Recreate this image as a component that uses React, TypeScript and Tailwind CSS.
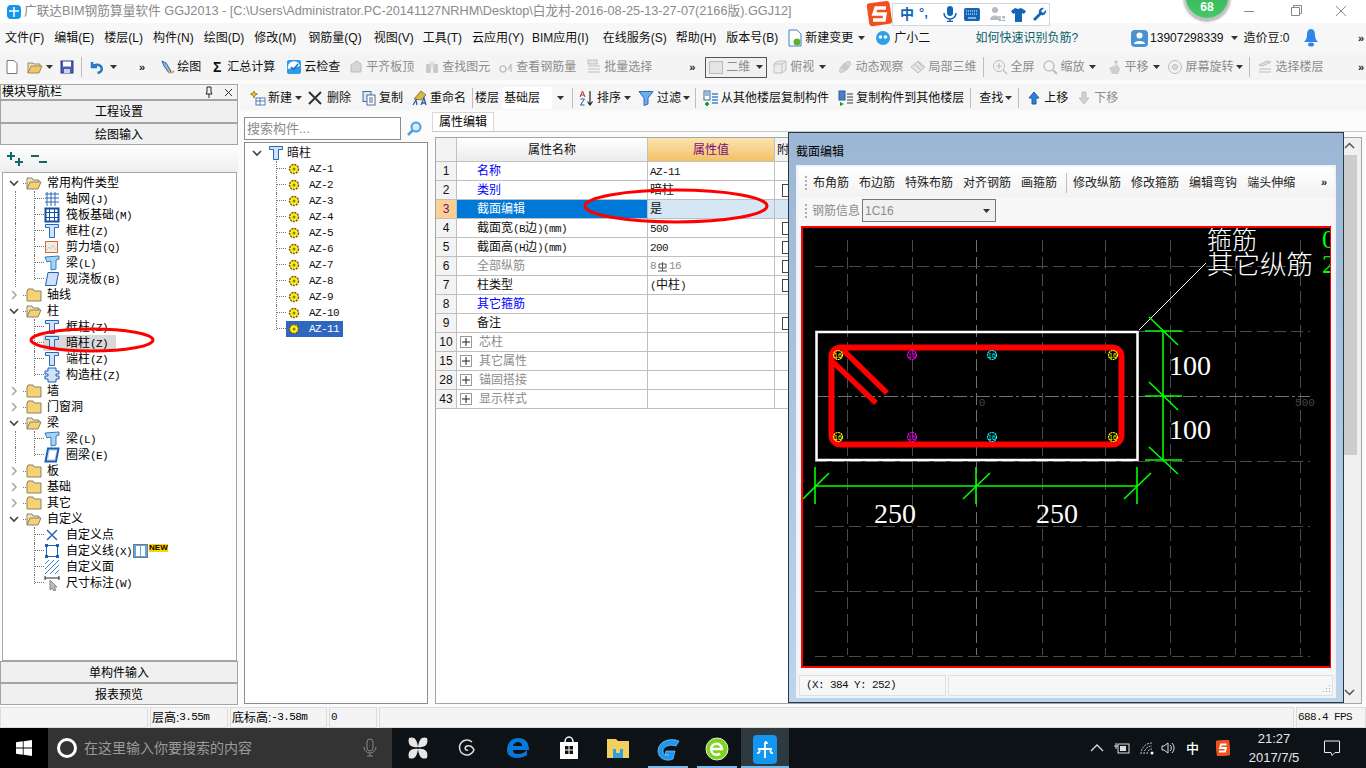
import React from "react";
import clsx from "clsx";

type Ico = React.FC<{ className?: string }>;
const svg = (children: React.ReactNode, w = 16, h = 16): Ico => ({ className }) => (
  <svg width={w} height={h} viewBox={`0 0 ${w} ${h}`} className={clsx("shrink-0", className)}>{children}</svg>
);

// --- tree icons
const FolderClosed = svg(<path d="M1 4l1-2h5l1 2h7v10H1z" fill="#f6d272" stroke="#8f8266" />);
const FolderOpen = svg(<><path d="M1 14V3h5l1 2h6v2" fill="#efe3c0" stroke="#8f8266" /><path d="M1 14l3-7h11l-3 7z" fill="#f6d272" stroke="#8f8266" /></>);
const Column = svg(<path d="M1.500 1.500h13v3h-4v10h-5v-10h-4z" fill="#cfe2f8" stroke="#2a66b8" />);
const GridIco = svg(<path d="M1 3h14M1 7h14M1 11h14M3 1v14M7 1v14M11 1v14" stroke="#2a66b8" fill="none" />);
const RaftIco = svg(<><rect x="1.500" y="1.500" width="13" height="13" fill="#fff" stroke="#164f9c" strokeWidth="2" /><path d="M1 5.500h14M1 10.500h14M5.500 1v14M10.500 1v14" stroke="#164f9c" /></>);
const WallIco = svg(<><rect x="1.500" y="2.500" width="12" height="11" fill="#f4ece0" stroke="#d2693a" /><path d="M3 11l2-3 2 2 2-4 3 5" stroke="#aaa" fill="none" strokeDasharray="1 1" /></>);
const BeamIco = svg(<path d="M1 2l14-1v3l-3 1v9l-5 1V6L3 7z" fill="#a9d2f2" stroke="#2a7fc8" />);
const SlabIco = svg(<path d="M4 1.500h10.500l-2.500 13H1.500z" fill="#cfe2f8" stroke="#1f5fb4" />);
const RingIco = svg(<><path d="M4 1.500h10.500l-2.500 13H1.500z" fill="#cfe2f8" stroke="#1f5fb4" strokeWidth="2" /><path d="M6 4h6l-1.500 8H4.500z" fill="#fff" /></>);
const GzzIco = svg(<path d="M4 1h8v3h3v3h-3v2h3v3h-3v3H4v-3H1V9h3V7H1V4h3z" fill="#cfe2f8" stroke="#1f5fb4" />);
const PointIco = svg(<path d="M3 3l10 10M13 3L3 13" stroke="#2a66b8" strokeWidth="1.500" />);
const LineIco = svg(<><rect x="2.500" y="2.500" width="11" height="11" fill="none" stroke="#1f5fb4" /><path d="M1 1h3v3H1zM12 1h3v3h-3zM1 12h3v3H1zM12 12h3v3h-3z" fill="#1f5fb4" /></>);
const HatchIco = svg(<path d="M1 5l4-4M1 10l9-9M1 15L15 1M6 15l9-9M11 15l4-4" stroke="#3f7fd0" />);
const DimIco = svg(<><path d="M1 1v4M1 3h14M15 1v4" stroke="#222" /><path d="M6 5v10l2-2 2 3 2-1-2-3h3z" fill="#bbb" stroke="#888" /></>);
const Rebar = svg(<><circle cx="8" cy="8" r="4.500" fill="#ffef1a" stroke="#6b5a10" strokeWidth="1.500" strokeDasharray="2 1" /><circle cx="8" cy="8" r="1.500" fill="#8a7a10" /></>);

// --- toolbar icons
const DocIco = svg(<path d="M3 1.500h7l3 3v10H3z" fill="#fff" stroke="#777" />);
const OpenIco = svg(<><path d="M1 14V4h5l1 1h6v2" fill="#efe3c0" stroke="#9a8a5a" /><path d="M1 14l3-7h11l-3 7z" fill="#f3c568" stroke="#9a8a5a" /></>);
const SaveIco = svg(<><rect x="2" y="2" width="12" height="12" fill="#4a5bb0" stroke="#2c3a85" /><rect x="4" y="2.500" width="8" height="5" fill="#fff" /><rect x="5" y="10" width="6" height="4" fill="#cdd3ee" /></>);
const UndoIco = svg(<path d="M3 3v5h5M3.500 7.500c3-3 8-2 9 1s-1 5-4 5.500" fill="none" stroke="#2a78c8" strokeWidth="2.500" />);
const PencilIco = svg(<><path d="M3 2l4 2 5 8-2 2-5-7z" fill="#8fb6e0" stroke="#3a5f98" /><path d="M9 13a4 3 0 006-1" fill="none" stroke="#c9a04a" strokeWidth="1.500" /></>);
const CheckIco = svg(<><rect x="1" y="1" width="14" height="14" rx="2" fill="#2f9be8" /><path d="M2 10a6 6 0 0112-3" fill="#fff" /><path d="M5 8l2.500 2.500L12 5" fill="none" stroke="#1c72c0" strokeWidth="1.500" /></>);
const GrayBlock = svg(<path d="M3 13V6l6-4 4 3v8z" fill="#d6d6d6" stroke="#bbb" />);
const GrayBino = svg(<><rect x="2" y="5" width="5" height="9" rx="1.500" fill="#c9c9c9" /><rect x="9" y="5" width="5" height="9" rx="1.500" fill="#c9c9c9" /><rect x="6" y="3" width="4" height="5" fill="#dcdcdc" /></>);
const GrayLink = svg(<path d="M2 10a3 3 0 016 0 3 3 0 01-6 0zM10 11l3-6v8" fill="none" stroke="#c4c4c4" strokeWidth="1.500" />);
const GrayList = svg(<><rect x="2" y="1" width="9" height="4" fill="#e4e4e4" stroke="#c0c0c0" /><path d="M2 7h12M2 10h12M2 13h12" stroke="#c0c0c0" /></>);
const GrayCube = svg(<path d="M2 5l4-3h8v9l-4 3H2zM2 5h8v9M10 5l4-3" fill="#ececec" stroke="#c0c0c0" />);
const GrayOrbit = svg(<><ellipse cx="8" cy="8" rx="7" ry="3" transform="rotate(-45 8 8)" fill="#d8d8d8" stroke="#c4c4c4" /><circle cx="8" cy="8" r="3" fill="#c8c8c8" /></>);
const GrayLocal = svg(<path d="M1 8l7-6 7 6-7 6zM5 5l6 6M8 3l5 5" fill="#e4e4e4" stroke="#bbb" />);
const GrayZoom = svg(<><circle cx="7" cy="7" r="5.500" fill="#f4f4f4" stroke="#bbb" /><path d="M11 11l4 4M4 7h6M7 4v6" stroke="#bbb" strokeWidth="1.200" /></>);
const GrayMag = svg(<><circle cx="7" cy="7" r="5" fill="#f4f4f4" stroke="#c4c4c4" strokeWidth="1.500" /><path d="M11 11l4 4" stroke="#bbb" strokeWidth="2" /></>);
const GrayPan = svg(<><path d="M3 9l4-2 5-1 2 4-2 5H6z" fill="#cfcfcf" /><path d="M10 1v5M8 3h4" stroke="#bbb" /></>);
const GrayRot = svg(<><circle cx="8" cy="8" r="6.500" fill="#f2f2f2" stroke="#bdbdbd" /><circle cx="8" cy="8" r="2.500" fill="#ddd" stroke="#bdbdbd" /></>);
const GrayFloors = svg(<path d="M2 6l8-4 4 1-8 4zM2 10h12M2 13h12" fill="#e0e0e0" stroke="#bdbdbd" />);
const NewBuild = svg(<><rect x="6" y="8" width="9" height="7" fill="#fff" stroke="#4a7fb8" /><path d="M6 11h9M10 8v7" stroke="#4a7fb8" /><path d="M4 1l1 2.500L7.500 4 5 5.500 4 8 3 5.500.5 4 3 3z" fill="#e8c33a" stroke="#a58820" /></>);
const CopyIco = svg(<><rect x="2" y="1.500" width="8" height="10" fill="#dbe7f5" stroke="#4a6b98" /><rect x="6" y="5" width="8" height="10" fill="#fff" stroke="#4a6b98" /><path d="M8 8h4M8 10h4M8 12h4" stroke="#4a6b98" /></>);
const RenameIco = svg(<><path d="M2 9l7-8 5 4-5 5z" fill="#d9b84a" stroke="#8a7a30" /><path d="M1 15l3-5 1 5M9 15l3-7 2 7M10 13h3" fill="none" stroke="#2b5fa8" strokeWidth="1.300" /></>);
const SortIco = svg(<><path d="M1 7l2.500-6L6 7M2 5h3" fill="none" stroke="#b03030" /><path d="M1.500 9h4l-4 6h4" fill="none" stroke="#2a60b0" /><path d="M11 1v13M8.500 11.500L11 15l2.500-3.500" fill="none" stroke="#222" strokeWidth="1.200" /></>);
const FilterIco = svg(<path d="M1 1.500h14L10 8v6l-4 1.500V8z" fill="#6bb0ea" stroke="#2a70b8" />);
const CopyFrom = svg(<><rect x="1" y="1" width="6" height="9" fill="#fff" stroke="#3a66a8" /><path d="M2 3h4M2 5h4" stroke="#3a66a8" /><path d="M2 14h4M4 12v4" stroke="#1b9b3a" strokeWidth="2" /><path d="M9 4h6M9 7h6M9 10h6M9 13h6" stroke="#3f86c8" strokeWidth="1.500" /></>);
const CopyTo = svg(<><rect x="1" y="1" width="6" height="9" fill="#4a7fc0" stroke="#2a5fa0" /><path d="M2 12l4 2-4 2z" fill="#1b9b3a" /><path d="M9 4h6M9 7h6M9 10h6M9 13h6" stroke="#7a7a7a" strokeWidth="1.500" /></>);
const UpIco = svg(<path d="M8 2l5 6h-3v6H6V8H3z" fill="#2a80d8" stroke="#1a5aa8" />);
const DownIco = svg(<path d="M8 14l5-6h-3V2H6v6H3z" fill="#d0d0d0" stroke="#c0c0c0" />);

const Arrow = ({ className }: { className?: string }) => (
  <svg width="7" height="4" viewBox="0 0 7 4" className={clsx("shrink-0", className)}><path d="M0 0h7L3.500 4z" fill="#333" /></svg>
);
const More = ({ className }: { className?: string }) => (
  <span className={clsx("text-[11px] font-bold leading-none tracking-[-1px] text-[#222]", className)}>»</span>
);
const Sep = ({ className }: { className?: string }) => <span className={clsx("h-5 w-px shrink-0 bg-[#bdbdbd]", className)} />;

const Tool = ({ icon: I, label, arrow, gray, className }: { icon?: Ico; label?: string; arrow?: string; gray?: boolean; className?: string }) => (
  <div className={clsx("flex shrink-0 items-center gap-[2px]", gray && "text-[#8c8c8c]", className)}>
    {I && <I />}
    {label && <span>{label}</span>}
    {arrow && <Arrow className={arrow} />}
  </div>
);

// latin parts go narrow like the bitmap font of the original
const MONO = "font-['Liberation_Mono',monospace] text-[11px] tracking-[-0.6px]";
const Mixed = ({ t }: { t: string }) => (
  <span className="whitespace-nowrap">
    {t.split(/([\x00-\x7f]+)/).map((p, i) => (i % 2 ? <span key={i} className={MONO}>{p}</span> : p))}
  </span>
);

const Lbl = ({ t, k }: { t: string; k?: string }) => (
  <span className="whitespace-nowrap text-black">
    {t}
    {k && <span className={MONO}>{k}</span>}
  </span>
);

type Node = { t: string; k?: string; icon: Ico };
const RootRow = ({ t, open }: { t: string; open?: boolean }) => (
  <div className="flex h-4 items-center">
    <svg width="10" height="8" viewBox="0 0 10 8" className="ml-[6px] shrink-0">
      {open ? <path d="M1 2l4 4 4-4" fill="none" stroke="#444" strokeWidth="1.600" /> : <path d="M3 0l4 4-4 4" fill="none" stroke="#aaa" strokeWidth="1.600" />}
    </svg>
    <span className="ml-[4px] w-[3px] border-b border-dotted border-[#777]" />
    {open ? <FolderOpen /> : <FolderClosed />}
    <span className="ml-[5px]"><Lbl t={t} /></span>
  </div>
);
const ChildRow = ({ n, last, guide = true }: { n: Node; last?: boolean; guide?: boolean }) => (
  <div className="flex h-4 items-stretch">
    <span className={clsx("ml-[12px] w-[19px]", guide && "border-l border-dotted border-[#777]")} />
    <span className={clsx("w-[10px] border-l border-dotted border-[#777]", last && "h-[9px]")}>
      <span className="block h-[8px] border-b border-dotted border-[#777]" />
    </span>
    <span className="flex items-center"><n.icon /></span>
    <span className="ml-[6px] flex items-center"><Lbl t={n.t} k={n.k} /></span>
  </div>
);

const LeftBtn = ({ children, className }: { children: React.ReactNode; className?: string }) => (
  <div className={clsx("flex w-[238px] items-center justify-center border border-[#a5a5a5] bg-[#f0f0f0] pt-px text-black", className)}>{children}</div>
);

const MENUS: [string, string?][] = [
  ["文件(F)"], ["编辑(E)"], ["楼层(L)"], ["构件(N)"], ["绘图(D)"], ["修改(M)"], ["钢筋量(Q)", "ml-[2px]"], ["视图(V)", "ml-[2px]"],
  ["工具(T)", "-ml-[1px]"], ["云应用(Y)"], ["BIM应用(I)", "-ml-[2px]"], ["在线服务(S)", "ml-[4px]"], ["帮助(H)", "-ml-[1px]"], ["版本号(B)"],
];

const AZ = ["AZ-1", "AZ-2", "AZ-3", "AZ-4", "AZ-5", "AZ-6", "AZ-7", "AZ-8", "AZ-9", "AZ-10", "AZ-11"];

type Row = { n: string; name: string; v?: string; c?: string; box?: boolean; plus?: boolean };
const ROWS: Row[] = [
  { n: "1", name: "名称", v: "AZ-11", c: "text-[#0000ff]" },
  { n: "2", name: "类别", v: "暗柱", c: "text-[#0000ff]", box: true },
  { n: "3", name: "截面编辑", v: "是" },
  { n: "4", name: "截面宽(B边)(mm)", v: "500", box: true },
  { n: "5", name: "截面高(H边)(mm)", v: "200", box: true },
  { n: "6", name: "全部纵筋", c: "text-[#8c8c8c]", box: true },
  { n: "7", name: "柱类型", v: "(中柱)", box: true },
  { n: "8", name: "其它箍筋", c: "text-[#0000ff]" },
  { n: "9", name: "备注", box: true },
  { n: "10", name: "芯柱", c: "text-[#8c8c8c]", plus: true },
  { n: "15", name: "其它属性", c: "text-[#8c8c8c]", plus: true },
  { n: "28", name: "锚固搭接", c: "text-[#8c8c8c]", plus: true },
  { n: "43", name: "显示样式", c: "text-[#8c8c8c]", plus: true },
];

const PropRow = ({ r }: { r: Row }) => {
  const sel = r.n === "3";
  return (
    <div className="flex h-[19px] border-b border-[#c0c0c0] leading-[18px]">
      <div className={clsx("flex w-[21px] items-center justify-center border-r border-[#c0c0c0]", sel ? "bg-[#fbd193] text-[#7a0a7a]" : "bg-[#f3f3f3]")}>{r.n}</div>
      <div className={clsx("flex w-[191px] items-center border-r border-[#c0c0c0]", sel && "bg-[#0078d7] text-white", r.c)}>
        {r.plus ? (
          <span className="ml-[3px] mr-[7px] flex h-[12px] w-[12px] items-center justify-center border border-[#9a9a9a] text-[#333]">
            <svg width="8" height="8" viewBox="0 0 8 8"><path d="M0 4h8M4 0v8" stroke="#222" /></svg>
          </span>
        ) : (
          <span className="w-[20px]" />
        )}
        <Mixed t={r.name} />
      </div>
      <div className={clsx("flex w-[127px] items-center border-r border-[#c0c0c0] pl-[2px]", sel && "bg-[#d5e7f5]")}>
        {r.n === "6" ? (
          <span className={clsx("flex items-center text-[#8c8c8c]", MONO)}>
            8
            <svg width="11" height="11" viewBox="0 0 11 11" className="mx-[1px]"><path d="M2 3h7v4H2zM5.500 1v9M1 10h9" fill="none" stroke="#555" /></svg>
            16
          </span>
        ) : (
          r.v && <Mixed t={r.v} />
        )}
      </div>
      <div className={clsx("flex flex-1 items-center pl-[7px]", sel && "bg-[#d5e7f5]")}>
        {r.box && <span className="h-[13px] w-[13px] border border-[#444] bg-white" />}
      </div>
    </div>
  );
};

// the section drawing, coordinates are screen pixels
const Rb = ({ x, y, c }: { x: number; y: number; c: string }) => (
  <g>
    <circle cx={x} cy={y} r="4.500" fill="none" stroke={c} strokeWidth="1.200" strokeDasharray="2 .6" />
    <text x={x} y={y + 2.500} fontSize="7" fill={c} textAnchor="middle" fontFamily="Liberation Sans">16</text>
  </g>
);
const Section = () => {
  const vs = [847, 912, 976, 1042, 1105, 1170, 1235, 1300];
  const hs = [266, 331, 396, 461, 526, 591, 656];
  const serif = "Liberation Serif, serif";
  const cjk = "Noto Sans CJK SC, sans-serif";
  return (
    <svg viewBox="803 228 527 438" width="527" height="438" className="block bg-black">
      <g shapeRendering="crispEdges">
        {vs.map((x) => <path key={x} d={`M${x}.5 240V655`} stroke={x === 976 ? "#707070" : "#4a4a4a"} strokeDasharray="12 5" />)}
        {hs.map((y) => <path key={y} d={`M815 ${y}.5H1310`} stroke={y === 396 ? "#707070" : "#4a4a4a"} strokeDasharray={y === 396 ? "14 3 3 3" : "12 5"} />)}
      </g>
      <text x="982" y="406" fontSize="11" fill="#444" textAnchor="middle" fontFamily="Liberation Mono">0</text>
      <text x="1305" y="406" fontSize="11" fill="#444" textAnchor="middle" fontFamily="Liberation Mono">500</text>
      <text x="1207" y="249" fontSize="25" fill="#fff" fontWeight="300" fontFamily={cjk}>箍筋</text>
      <text x="1207" y="274" fontSize="26.500" fill="#fff" fontWeight="300" fontFamily={cjk}>其它纵筋</text>
      <text x="1322" y="248" fontSize="26" fill="#00ff00" fontFamily={serif}>0</text>
      <text x="1322" y="273" fontSize="26" fill="#00ff00" fontFamily={serif}>2</text>
      <path d="M1139 330L1206 263" stroke="#fff" />
      <rect x="816.500" y="332" width="321" height="128" fill="none" stroke="#fff" strokeWidth="2.500" />
      <rect x="831.500" y="347.500" width="290" height="97" rx="9" fill="none" stroke="#ff0000" strokeWidth="6" />
      <path d="M843 350L887 393M833 362L876 403" stroke="#ff0000" strokeWidth="5.500" />
      <Rb x={838} y={355} c="#ffff00" /><Rb x={912} y={355} c="#ff00ff" /><Rb x={992} y={355} c="#00ffff" /><Rb x={1113} y={355} c="#ffff00" />
      <Rb x={838} y={437} c="#ffff00" /><Rb x={912} y={437} c="#ff00ff" /><Rb x={992} y={437} c="#00ffff" /><Rb x={1113} y={437} c="#ffff00" />
      <g stroke="#00ff00" strokeWidth="1.600" fill="none">
        <path d="M1145 331H1182M1145 396H1182M1145 460H1182M1163 331V460" />
        <path d="M1149 317L1178 345M1149 382L1178 410M1149 447L1178 474" />
        <path d="M815 486H1137M815 467V504M976 467V504M1137 467V504" />
        <path d="M803 499L829 473M963 499L990 473M1124 499L1151 473" />
      </g>
      <g fontSize="28" fill="#fff" textAnchor="middle" fontFamily={serif}>
        <text x="1190" y="375">100</text>
        <text x="1190" y="439">100</text>
        <text x="895" y="523">250</text>
        <text x="1057" y="523">250</text>
      </g>
    </svg>
  );
};

const Grip = ({ className }: { className?: string }) => (
  <span className={clsx("flex shrink-0 flex-col gap-[2px]", className)}>
    <span className="h-[2px] w-[2px] bg-[#aaa]" /><span className="h-[2px] w-[2px] bg-[#aaa]" /><span className="h-[2px] w-[2px] bg-[#aaa]" /><span className="h-[2px] w-[2px] bg-[#aaa]" />
  </span>
);

const FloatWin = () => (
  <div className="absolute left-[788px] top-[132px] flex h-[571px] w-[556px] flex-col border border-[#2a3a44] bg-gradient-to-b from-[#9cb7d4] to-[#bcd4ec] px-[7px] pb-[4px]">
    <div className="flex h-[32px] shrink-0 items-center pt-[5px] text-black">截面编辑</div>
    <div className="flex flex-1 flex-col border-2 border-[#eef3f8] bg-[#f7f7f7]">
      <div className="flex h-[30px] shrink-0 items-center gap-[10px] rounded-t bg-gradient-to-b from-white to-[#f2f2f2] pl-[7px] pt-px text-[#222]">
        <Grip className="-mr-[4px]" />
        {["布角筋", "布边筋", "特殊布筋", "对齐钢筋", "画箍筋"].map((t) => <span key={t}>{t}</span>)}
        <Sep className="-ml-px -mr-[4px]" />
        {["修改纵筋", "修改箍筋", "编辑弯钩", "端头伸缩"].map((t) => <span key={t}>{t}</span>)}
        <More className="ml-auto mr-[8px]" />
      </div>
      <div className="flex h-[27px] shrink-0 items-center pl-[7px] text-[#8c8c8c]">
        <Grip />
        <span className="ml-[5px]">钢筋信息</span>
        <div className="ml-[2px] flex h-[23px] w-[134px] items-center justify-between border border-[#777] bg-[#f0f0f0] px-[2px] pr-[5px]">
          1C16 <Arrow />
        </div>
      </div>
      <div className="mx-[3px] mt-[2px] border-2 border-[#ff0000]"><Section /></div>
      <div className={clsx("mt-auto flex h-[21px] shrink-0 gap-[2px] px-[1px]", MONO)}>
        <div className="flex w-[147px] items-center border border-[#e0e0e0] pl-[6px]">(X: 384 Y: 252)</div>
        <div className="flex flex-1 items-end justify-end border border-[#e0e0e0] p-[1px]">
          <svg width="10" height="10" viewBox="0 0 10 10"><path d="M8 1h1v1H8zM5 4h1v1H5zM8 4h1v1H8zM2 7h1v1H2zM5 7h1v1H5zM8 7h1v1H8z" fill="#aaa" /></svg>
        </div>
      </div>
    </div>
  </div>
);

const Shell = () => (
  <div className="flex h-[40px] shrink-0 items-stretch bg-[#0c1216]">
    <div className="flex w-[48px] items-center justify-center bg-black">
      <svg width="16" height="16" viewBox="0 0 16 16"><path d="M0 2.300l6.800-1v6.200H0zM7.600 1.200L16 0v7.500H7.600zM0 8.400h6.800v6.300L0 13.700zM7.600 8.400H16V16l-8.400-1.200z" fill="#fff" /></svg>
    </div>
    <div className="flex w-[344px] items-center bg-[#333333] pl-[9px] text-[#9a9a9a]">
      <span className="h-[20px] w-[20px] rounded-full border-[3px] border-white" />
      <span className="ml-[7px] text-[14px]">在这里输入你要搜索的内容</span>
      <svg width="14" height="20" viewBox="0 0 14 20" className="ml-auto mr-[15px]"><rect x="4" y="1" width="6" height="12" rx="3" fill="none" stroke="#888" /><path d="M1 9a6 6 0 0012 0M7 15v3M4 18h6" fill="none" stroke="#888" /></svg>
    </div>
    <div className="flex w-[50px] items-center justify-center pl-[2px]">
      <svg width="22" height="24" viewBox="0 0 22 24"><path d="M2 2c5-2 8 1 9 9-6 1-11-2-9-9zM20 2c2 7-3 10-9 9 1-8 4-11 9-9zM2 22c-2-7 3-10 9-9-1 8-4 11-9 9zM20 22c-5 2-8-1-9-9 6-1 11 2 9 9z" fill="#e6e6e6" /></svg>
    </div>
    <div className="flex w-[49px] items-center justify-center">
      <svg width="20" height="20" viewBox="0 0 20 20"><path d="M15 4a7.500 7.500 0 10 2 8c-1-3-4-5-7-4-3 1-2 5 1 4" fill="none" stroke="#ddd" strokeWidth="1.500" /></svg>
    </div>
    <div className="flex w-[53px] items-center justify-center">
      <svg width="24" height="24" viewBox="0 0 24 24"><path d="M12 2C5 2 1 8 1 14c0 6 5 8 10 8 4 0 7-1 10-3v-5c-3 3-6 4-9 4-3 0-5-1-5-4h16c0-8-4-12-11-12zM7 10c1-3 3-4 5-4s4 1 4 4z" fill="#0a78d7" /></svg>
    </div>
    <div className="flex w-[49px] items-center justify-center">
      <svg width="20" height="24" viewBox="0 0 20 24"><path d="M1 6h18v17H1z" fill="#fff" /><path d="M6 6a4 5 0 018 0" fill="none" stroke="#fff" strokeWidth="1.500" /><path d="M6 10h3.500v3.500H6zM10.500 10H14v3.500h-3.500zM6 14.500h3.500V18H6zM10.500 14.500H14V18h-3.500z" fill="#111" /></svg>
    </div>
    <div className="flex w-[50px] items-center justify-center">
      <svg width="24" height="22" viewBox="0 0 24 22"><path d="M1 2h9l2 2h11v17H1z" fill="#f3cf5f" /><rect x="7" y="12" width="10" height="9" fill="#2aa3e0" /><rect x="10" y="12" width="4" height="4" fill="#f3cf5f" /></svg>
    </div>
    <div className="flex w-[50px] flex-col items-center justify-between pt-[9px]">
      <svg width="26" height="26" viewBox="0 0 26 26"><path d="M24 4C14 0 3 5 3 14c0 8 9 11 15 8l2-8h-9l-1 4h4c-4 1-6-1-6-4 0-5 8-7 13-5z" fill="#1f96ee" stroke="#7cc8f8" strokeWidth=".7" /></svg>
      <span className="h-[2px] w-[40px] bg-[#76b9ed]" />
    </div>
    <div className="flex w-[47px] flex-col items-center justify-between pt-[8px]">
      <svg width="24" height="26" viewBox="0 0 24 26"><circle cx="12" cy="13" r="11" fill="#7ed321" stroke="#dff5c8" /><path d="M6 13h11a5.500 5.500 0 10-2 4.500M7 13" fill="none" stroke="#fff" strokeWidth="2.500" /></svg>
      <span className="h-[2px] w-[40px] bg-[#76b9ed]" />
    </div>
    <div className="ml-[1px] flex w-[48px] flex-col items-center justify-between bg-[#2f3a40] pt-[7px]">
      <div className="flex h-[29px] w-[24px] items-center justify-center rounded bg-[#1296ef]">
        <svg width="20" height="20" viewBox="0 0 20 20"><path d="M10 2v16M3 9h14M3 9a2 2 0 01-1 4M17 9a2 2 0 001 4M10 2a2 2 0 012 2" fill="none" stroke="#fff" strokeWidth="1.800" /></svg>
      </div>
      <span className="h-[2px] w-full bg-[#76b9ed]" />
    </div>
    <div className="ml-auto flex items-center text-white">
      <svg width="14" height="8" viewBox="0 0 14 8" className="mr-[10px]"><path d="M1 7l6-6 6 6" fill="none" stroke="#ddd" strokeWidth="1.300" /></svg>
      <svg width="16" height="14" viewBox="0 0 16 14" className="mr-[9px]"><rect x="4" y="3" width="11" height="9" fill="none" stroke="#ddd" /><rect x="6" y="5" width="6" height="5" fill="#ddd" /><path d="M0 5h4M2 2v6" stroke="#ddd" /></svg>
      <svg width="16" height="14" viewBox="0 0 16 14" className="mr-[6px]"><path d="M2 13a11 11 0 0111-11M5 13a8 8 0 018-8M8 13a5 5 0 015-5" fill="none" stroke="#ccc" strokeDasharray="2 1" /><circle cx="13" cy="12" r="1.500" fill="#fff" /></svg>
      <svg width="14" height="14" viewBox="0 0 14 14" className="mr-[11px]"><path d="M1 5h2l4-3v10L3 9H1zM9 4a4 4 0 010 6M11 2a7 7 0 010 10" fill="none" stroke="#ddd" /></svg>
      <span className="mr-[17px] text-[13px] font-medium">中</span>
      <svg width="14" height="16" viewBox="0 0 14 16" className="mr-[13px]"><rect x="0" y="0" width="14" height="16" rx="2" transform="rotate(-6 7 8)" fill="#f0501e" /><path d="M10.500 4.500H5L4 8h6l-1 3.500H3" fill="none" stroke="#fff" strokeWidth="1.800" /></svg>
      <div className="mr-[19px] flex w-[62px] flex-col items-center text-[13px] leading-[19px] text-[#e8e8e8]">
        <span>21:27</span>
        <span>2017/7/5</span>
      </div>
      <svg width="16" height="17" viewBox="0 0 16 17" className="mr-[26px]"><path d="M.5 1h15v11.500h-4.500l-3 3-1-3H.500z" fill="none" stroke="#eee" /></svg>
    </div>
  </div>
);

const App = () => (
  <div className="relative flex h-[768px] w-[1366px] flex-col overflow-hidden bg-[#fbfbfb] font-['Liberation_Sans','Noto_Sans_CJK_SC',sans-serif] text-[12px] leading-none text-[#111]">
    {/* title bar */}
    <div className="flex h-[23px] shrink-0 items-center bg-white pl-[7px] text-[12.700px] text-[#8a8a8a]">
      <span className="flex h-[14px] w-[14px] items-center justify-center rounded-sm bg-[#1296ef]">
        <svg width="12" height="12" viewBox="0 0 12 12"><path d="M6 1v10M1 5h10" stroke="#fff" strokeWidth="1.500" /></svg>
      </span>
      <span className="ml-[3px] whitespace-nowrap">广联达BIM钢筋算量软件 GGJ2013 - [C:\Users\Administrator.PC-20141127NRHM\Desktop\白龙村-2016-08-25-13-27-07(2166版).GGJ12]</span>
    </div>

    {/* menu bar */}
    <div className="flex h-[30px] shrink-0 items-center gap-[10px] bg-[#f7f7f7] pl-[5px]">
      {MENUS.map(([m, c]) => <span key={m} className={clsx("shrink-0", c)}>{m}</span>)}
      <svg width="14" height="18" viewBox="0 0 14 18" className="shrink-0"><path d="M1 1h8l4 4v12H1z" fill="#fff" stroke="#3a80c8" /><circle cx="9" cy="13" r="3.500" fill="#5fae32" /></svg>
      <span className="-ml-[7px] shrink-0">新建变更</span>
      <Arrow className="-ml-[5px]" />
      <svg width="16" height="16" viewBox="0 0 16 16" className="shrink-0"><circle cx="8" cy="8" r="7" fill="#2f9fe8" /><circle cx="5.500" cy="7" r="1.800" fill="#fff" /><circle cx="10.500" cy="7" r="1.800" fill="#fff" /></svg>
      <span className="-ml-[7px] shrink-0">广小二</span>
      <span className="ml-[35px] shrink-0 text-[#0a5f6a]">如何快速识别负筋?</span>
      <div className="ml-[43px] flex shrink-0 items-center gap-[2px]">
        <span className="flex h-[17px] w-[17px] items-center justify-center rounded-sm bg-[#4a93d3]">
          <svg width="11" height="12" viewBox="0 0 11 12"><circle cx="5.500" cy="3.500" r="3" fill="#fff" /><path d="M0 12c0-4 11-4 11 0z" fill="#fff" /></svg>
        </span>
        <span>13907298339</span>
        <Arrow className="ml-[6px]" />
      </div>
      <span className="-ml-[5px] shrink-0">造价豆:0</span>
      <svg width="14" height="20" viewBox="0 0 14 20" className="ml-[4px] shrink-0"><path d="M7 1c-3 0-4 3-4 6s-1 5-3 7h14c-2-2-3-4-3-7s-1-6-4-6z" fill="#2f86e8" /><ellipse cx="7" cy="16.500" rx="3" ry="2" fill="#2f86e8" /></svg>
      <More className="ml-auto mr-[3px]" />
    </div>

    {/* standard toolbar */}
    <div className="flex h-[27px] shrink-0 items-center bg-[#f4f4f4] pt-px">
      <DocIco className="ml-[4px]" />
      <OpenIco className="ml-[7px]" />
      <Arrow className="ml-[3px]" />
      <SaveIco className="ml-[6px]" />
      <Sep className="ml-[6px]" />
      <UndoIco className="ml-[7px]" />
      <Arrow className="ml-[5px]" />
      <More className="ml-[22px]" />
      <Tool icon={PencilIco} label="绘图" className="ml-[15px]" />
      <div className="ml-[8px] flex w-[16px] justify-center text-[14px] font-bold">Σ</div>
      <span className="ml-[2px]">汇总计算</span>
      <Tool icon={CheckIco} label="云检查" className="ml-[11px]" />
      <Tool icon={GrayBlock} label="平齐板顶" gray className="ml-[8px]" />
      <Tool icon={GrayBino} label="查找图元" gray className="ml-[10px]" />
      <Tool icon={GrayLink} label="查看钢筋量" gray className="ml-[8px]" />
      <Tool icon={GrayList} label="批量选择" gray className="ml-[10px]" />
      <More className="ml-[37px]" />
      <div className="ml-[11px] flex h-[21px] w-[62px] items-center border border-[#555] bg-[#f0f0f0] pl-[3px] text-[#8c8c8c]">
        <span className="h-[13px] w-[14px] border border-[#bbb] bg-[#e4e4e4]" />
        <span className="ml-[3px]">二维</span>
        <Arrow className="ml-[6px]" />
      </div>
      <Tool icon={GrayCube} label="俯视" arrow="ml-[3px]" gray className="ml-[5px]" />
      <Tool icon={GrayOrbit} label="动态观察" gray className="ml-[11px]" />
      <Tool icon={GrayLocal} label="局部三维" gray className="ml-[7px]" />
      <Sep className="ml-[7px]" />
      <Tool icon={GrayZoom} label="全屏" gray className="ml-[8px]" />
      <Tool icon={GrayMag} label="缩放" arrow="ml-[3px]" gray className="ml-[8px]" />
      <Tool icon={GrayPan} label="平移" arrow="ml-[3px]" gray className="ml-[10px]" />
      <Tool icon={GrayRot} label="屏幕旋转" arrow="ml-[1px]" gray className="ml-[7px]" />
      <Sep className="ml-[6px]" />
      <Tool icon={GrayFloors} label="选择楼层" gray className="ml-[7px]" />
      <More className="ml-auto mr-[3px]" />
    </div>

    {/* body */}
    <div className="flex min-h-0 flex-1">
      {/* module nav */}
      <div className="flex w-[240px] shrink-0 flex-col pt-[4px]">
        <div className="flex h-[16px] w-[238px] shrink-0 items-center border border-[#a5a5a5] bg-[#f4f4f4] pl-[1px] text-black">
          模块导航栏
          <svg width="10" height="12" viewBox="0 0 10 12" className="ml-auto"><path d="M3 1h4v5l1 2H2l1-2zM5 8v4" fill="none" stroke="#222" /></svg>
          <svg width="9" height="9" viewBox="0 0 9 9" className="ml-[10px] mr-[4px]"><path d="M1 1l7 7M8 1L1 8" stroke="#333" /></svg>
        </div>
        <LeftBtn className="h-[23px] shrink-0">工程设置</LeftBtn>
        <LeftBtn className="h-[22px] shrink-0">绘图输入</LeftBtn>
        <div className="flex h-[27px] w-[238px] shrink-0 items-center gap-[8px] bg-gradient-to-b from-white to-[#eeeeee] pl-[7px]">
          <svg width="16" height="14" viewBox="0 0 16 14"><path d="M4 0v8M0 4h8M12 6v8M8 10h8" stroke="#0e6a68" strokeWidth="2" /></svg>
          <svg width="16" height="14" viewBox="0 0 16 14"><path d="M0 4h8M8 10h8" stroke="#0e6a68" strokeWidth="2" /></svg>
        </div>
        <div className="ml-[2px] w-[235px] min-h-0 flex-1 border border-[#a5a5a5] bg-white pt-[2px]">
          <RootRow t="常用构件类型" open />
          {([
            { t: "轴网", k: "(J)", icon: GridIco }, { t: "筏板基础", k: "(M)", icon: RaftIco }, { t: "框柱", k: "(Z)", icon: Column },
            { t: "剪力墙", k: "(Q)", icon: WallIco }, { t: "梁", k: "(L)", icon: BeamIco }, { t: "现浇板", k: "(B)", icon: SlabIco },
          ] as Node[]).map((n, i) => <ChildRow key={n.t} n={n} last={i === 5} />)}
          <RootRow t="轴线" />
          <RootRow t="柱" open />
          <ChildRow n={{ t: "框柱", k: "(Z)", icon: Column }} />
          <div className="relative">
            <span className="absolute left-[40px] top-0 h-4 w-[73px] bg-[#d9d9d9]" />
            <div className="relative"><ChildRow n={{ t: "暗柱", k: "(Z)", icon: Column }} /></div>
          </div>
          <ChildRow n={{ t: "端柱", k: "(Z)", icon: Column }} />
          <ChildRow n={{ t: "构造柱", k: "(Z)", icon: GzzIco }} last />
          <RootRow t="墙" />
          <RootRow t="门窗洞" />
          <RootRow t="梁" open />
          <ChildRow n={{ t: "梁", k: "(L)", icon: BeamIco }} />
          <ChildRow n={{ t: "圈梁", k: "(E)", icon: RingIco }} last />
          <RootRow t="板" />
          <RootRow t="基础" />
          <RootRow t="其它" />
          <RootRow t="自定义" open />
          <ChildRow guide={false} n={{ t: "自定义点", icon: PointIco }} />
          <div className="flex items-center">
            <ChildRow guide={false} n={{ t: "自定义线", k: "(X)", icon: LineIco }} />
            <span className="ml-[1px] flex h-[14px] w-[15px] items-center justify-center gap-[1px] border border-[#777] bg-[#5aa9ee]">
              <span className="h-[10px] w-[4px] bg-white" /><span className="h-[10px] w-[4px] bg-white" />
            </span>
            <span className="-mt-[6px] ml-px bg-[#ffd400] text-[8px] font-bold leading-[8px] text-black">NEW</span>
          </div>
          <ChildRow guide={false} n={{ t: "自定义面", icon: HatchIco }} />
          <ChildRow guide={false} n={{ t: "尺寸标注", k: "(W)", icon: DimIco }} last />
        </div>
        <LeftBtn className="h-[22px] shrink-0">单构件输入</LeftBtn>
        <LeftBtn className="mb-[2px] h-[22px] shrink-0">报表预览</LeftBtn>
      </div>

      {/* main */}
      <div className="flex min-w-0 flex-1 flex-col">
        {/* component toolbar */}
        <div className="mt-[4px] flex h-[26px] shrink-0 items-center bg-[#f6f6f6] pl-[10px] pt-px">
          <Tool icon={NewBuild} label="新建" arrow="ml-[1px]" />
          <svg width="14" height="14" viewBox="0 0 14 14" className="ml-[6px] shrink-0"><path d="M1 1l12 12M13 1L1 13" stroke="#333" strokeWidth="2" /></svg>
          <span className="ml-[5px]">删除</span>
          <Tool icon={CopyIco} label="复制" className="ml-[10px]" />
          <Tool icon={RenameIco} label="重命名" className="ml-[9px]" />
          <Sep className="ml-[6px]" />
          <span className="ml-[2px]">楼层</span>
          <div className="ml-[3px] flex h-[22px] w-[50px] items-center bg-white pl-[2px]">基础层</div>
          <Arrow className="ml-[5px]" />
          <Sep className="ml-[8px]" />
          <Tool icon={SortIco} label="排序" arrow="ml-[1px]" className="ml-[6px]" />
          <FilterIco className="ml-[7px]" />
          <span className="ml-[3px]">过滤</span>
          <Arrow className="ml-[2px]" />
          <Sep className="ml-[5px]" />
          <Tool icon={CopyFrom} label="从其他楼层复制构件" className="ml-[7px]" />
          <Tool icon={CopyTo} label="复制构件到其他楼层" className="ml-[9px]" />
          <Sep className="ml-[6px]" />
          <span className="ml-[8px]">查找</span>
          <Arrow className="ml-[2px]" />
          <Sep className="ml-[6px]" />
          <Tool icon={UpIco} label="上移" className="ml-[7px]" />
          <Tool icon={DownIco} label="下移" gray className="ml-[8px]" />
        </div>

        <div className="flex min-h-0 flex-1">
          {/* component list */}
          <div className="ml-[4px] flex w-[184px] shrink-0 flex-col pb-[3px] pt-[7px]">
            <div className="flex h-[23px] shrink-0 items-center">
              <div className="flex h-[23px] w-[157px] items-center border border-[#8c8c8c] bg-white pl-[2px] text-[13px] text-[#8c8c8c]">搜索构件...</div>
              <svg width="16" height="16" viewBox="0 0 16 16" className="ml-[5px]"><circle cx="10" cy="6" r="4.500" fill="#d8ecfa" stroke="#4aa0e0" strokeWidth="2" /><path d="M6.500 9.500L2 14" stroke="#4aa0e0" strokeWidth="2.500" /></svg>
            </div>
            <div className="mt-[2px] min-h-0 flex-1 border border-[#8c8c8c] bg-white pt-[2px]">
              <div className="flex h-4 items-center pl-[7px]">
                <svg width="10" height="8" viewBox="0 0 10 8"><path d="M1 2l4 4 4-4" fill="none" stroke="#444" strokeWidth="1.600" /></svg>
                <Column className="ml-[6px]" />
                <span className="ml-[3px]">暗柱</span>
              </div>
              {AZ.map((a, i) => {
                const last = i === AZ.length - 1;
                return (
                  <div key={a} className="flex h-4 items-stretch">
                    <span className={clsx("ml-[31px] w-[10px] border-l border-dotted border-[#777]", last && "h-[9px]")}>
                      <span className="block h-[8px] border-b border-dotted border-[#777]" />
                    </span>
                    <div className={clsx("flex w-[57px] items-center", MONO, last && "bg-[#2f66c0] text-white")}>
                      <Rebar />
                      <span className="ml-[7px]">{a}</span>
                    </div>
                  </div>
                );
              })}
            </div>
          </div>

          {/* property panel */}
          <div className="ml-[4px] flex min-w-0 flex-1 flex-col pb-[3px] pt-[2px]">
            <div className="flex h-[20px] shrink-0 border-b border-[#c8c8c8]">
              <div className="flex w-[62px] items-center justify-center border-x border-t border-[#d8d8d8] bg-white text-black">属性编辑</div>
            </div>
            <div className="ml-[3px] mt-[5px] flex min-h-0 w-[927px] flex-1 border border-[#a5a5a5] bg-white">
              <div className="flex-1">
                <div className="flex h-[24px] border-b border-[#c0c0c0]">
                  <div className="w-[21px] border-r border-[#c0c0c0] bg-[#f3f3f3]" />
                  <div className="flex w-[191px] items-center justify-center border-r border-[#c0c0c0] bg-gradient-to-b from-white to-[#ececec]">属性名称</div>
                  <div className="flex w-[127px] items-center justify-center border-r border-[#c0c0c0] bg-gradient-to-b from-[#fbe3ad] to-[#f2c266] text-[#7a0a7a]">属性值</div>
                  <div className="flex flex-1 items-center bg-[#f3f3f3] pl-[2px]">附加</div>
                </div>
                {ROWS.map((r) => <PropRow key={r.n} r={r} />)}
              </div>
              <div className="flex w-[18px] shrink-0 flex-col bg-[#f0f0f0]">
                <svg width="14" height="17" viewBox="0 0 14 17"><path d="M2 10l4.500-4.500L11 10" fill="none" stroke="#555" strokeWidth="1.500" /></svg>
                <div className="h-[300px] w-[14px] bg-[#cdcdcd]" />
                <svg width="14" height="17" viewBox="0 0 14 17" className="mb-[3px] mt-auto"><path d="M2 7l4.500 4.500L11 7" fill="none" stroke="#555" strokeWidth="1.500" /></svg>
              </div>
            </div>
          </div>
        </div>
      </div>
    </div>

    {/* status bar */}
    <div className="flex h-[21px] shrink-0 gap-[2px] bg-[#f4f4f4]">
      <div className="w-[148px] border border-[#dcdcdc]" />
      {[["层高:", "3.55m", "w-[78px]"], ["底标高:", "-3.58m", "w-[97px]"]].map(([a, b, w]) => (
        <div key={a} className={clsx("flex items-center border border-[#dcdcdc] pl-[1px] text-black", w)}>
          {a}<span className={MONO}>{b}</span>
        </div>
      ))}
      <div className={clsx("flex w-[48px] items-center border border-[#dcdcdc] pl-[1px]", MONO)}>0</div>
      <div className="flex-1 border border-[#dcdcdc]" />
      <div className={clsx("flex w-[70px] items-center border border-[#dcdcdc] pl-[1px]", MONO)}>688.4 FPS</div>
    </div>

    <Shell />

    {/* floating section editor */}
    <FloatWin />

    {/* red hand-drawn marks */}
    <svg width="130" height="30" viewBox="0 0 130 30" className="absolute left-[28px] top-[325px]"><ellipse cx="64" cy="15" rx="61" ry="11" fill="none" stroke="#ff0000" strokeWidth="3" /></svg>
    <svg width="190" height="40" viewBox="0 0 190 40" className="absolute left-[581px] top-[186px]"><ellipse cx="95" cy="20" rx="91" ry="16" fill="none" stroke="#ff0000" strokeWidth="3" /></svg>

    {/* ime bar */}
    <div className="absolute left-[866px] top-[2px] flex h-[24px] items-center">
      <svg width="28" height="28" viewBox="0 0 28 28" className="relative z-10"><rect x="2" y="2" width="23" height="23" rx="3" transform="rotate(-8 14 14)" fill="#f0501e" /><path d="M20 8H10L8 14h11l-1 6H7" fill="none" stroke="#fff" strokeWidth="3.500" /></svg>
      <div className="-ml-[2px] flex h-[23px] w-[158px] items-center border border-[#cfd8e0] bg-white pl-[7px]">
        <span className="text-[14px] font-bold text-[#1266b8]">中</span>
        <span className="ml-[5px] mt-[-4px] text-[13px] font-bold text-[#1266b8]">°,</span>
        <svg width="14" height="16" viewBox="0 0 14 16" className="ml-[15px]"><rect x="4" y="0" width="6" height="10" rx="3" fill="#1266b8" /><path d="M1 7a6 6 0 0012 0M7 13v2M4 15.500h6" fill="none" stroke="#1266b8" strokeWidth="1.500" /></svg>
        <svg width="16" height="13" viewBox="0 0 16 13" className="ml-[7px]"><rect width="16" height="13" rx="2" fill="#1266b8" /><path d="M2 3h12M2 6h12" stroke="#fff" strokeDasharray="1 1" /><path d="M4 10h8" stroke="#fff" /></svg>
        <svg width="16" height="16" viewBox="0 0 16 16" className="ml-[9px]"><circle cx="6" cy="4" r="3" fill="#b4bcc4" /><path d="M1 14c0-6 10-6 10 0z" fill="#b4bcc4" /><text x="9" y="15" fontSize="7" fill="#7a8a96" fontFamily="Liberation Sans">15</text></svg>
        <svg width="15" height="15" viewBox="0 0 15 15" className="ml-[6px]"><path d="M4 1l3 1 3-1 5 3-2 3-2-1v9H4V6L2 7 0 4z" fill="#1266b8" /></svg>
        <svg width="15" height="15" viewBox="0 0 15 15" className="ml-[6px]"><path d="M14 3l-3 3-2-2 3-3a4 4 0 00-5 5L1 12l2 2 6-6a4 4 0 005-5z" fill="#1266b8" /></svg>
      </div>
    </div>

    {/* 360 badge + window buttons */}
    <div className="absolute left-[1184px] top-[-26px] flex h-[46px] w-[46px] items-end justify-center rounded-full border-[2px] border-[#b9c4bc] bg-gradient-to-b from-[#2fae4a] to-[#45c86a] pb-[5px] text-[12px] font-bold text-white shadow-[0_1px_3px_#888]">68</div>
    <svg width="104" height="14" viewBox="0 0 104 14" className="absolute left-[1244px] top-[4px]"><path d="M0 7.500h10" stroke="#888" /><path d="M47.500 3.500h8v8h-8zM49.500 3.500v-2h8v8h-2" fill="none" stroke="#888" /><path d="M92 2l10 10M102 2L92 12" stroke="#888" /></svg>
  </div>
);

export default App;
